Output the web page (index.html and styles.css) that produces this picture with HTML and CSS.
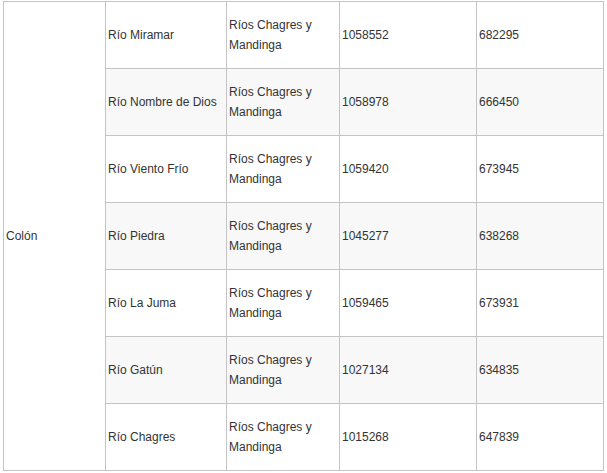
FILE: index.html
```html
<!DOCTYPE html>
<html>
<head>
<meta charset="utf-8">
<link rel="stylesheet" href="styles.css">
</head>
<body>
<table class="rivers">
  <colgroup>
    <col class="c1"><col class="c2"><col class="c3"><col class="c4"><col class="c5">
  </colgroup>
  <tbody>
    <tr>
      <td rowspan="7" class="prov">Colón</td>
      <td>Río Miramar</td>
      <td>Ríos Chagres y Mandinga</td>
      <td>1058552</td>
      <td>682295</td>
    </tr>
    <tr class="alt">
      <td>Río Nombre de Dios</td>
      <td>Ríos Chagres y Mandinga</td>
      <td>1058978</td>
      <td>666450</td>
    </tr>
    <tr>
      <td>Río Viento Frío</td>
      <td>Ríos Chagres y Mandinga</td>
      <td>1059420</td>
      <td>673945</td>
    </tr>
    <tr class="alt">
      <td>Río Piedra</td>
      <td>Ríos Chagres y Mandinga</td>
      <td>1045277</td>
      <td>638268</td>
    </tr>
    <tr>
      <td>Río La Juma</td>
      <td>Ríos Chagres y Mandinga</td>
      <td>1059465</td>
      <td>673931</td>
    </tr>
    <tr class="alt">
      <td>Río Gatún</td>
      <td>Ríos Chagres y Mandinga</td>
      <td>1027134</td>
      <td>634835</td>
    </tr>
    <tr>
      <td>Río Chagres</td>
      <td>Ríos Chagres y Mandinga</td>
      <td>1015268</td>
      <td>647839</td>
    </tr>
  </tbody>
</table>
</body>
</html>
```
FILE: styles.css
```css
html, body {
  margin: 0;
  padding: 0;
  background: #ffffff;
}
.rivers {
  margin: 1px 0 0 3px;
  border-collapse: collapse;
  table-layout: fixed;
  width: 601px;
  font-family: "Liberation Sans", Arial, sans-serif;
  font-size: 12px;
  line-height: 20px;
  color: #333333;
}
.c1 { width: 102px; }
.c2 { width: 121px; }
.c3 { width: 113px; }
.c4 { width: 137px; }
.c5 { width: 127px; }
.rivers td {
  border: 1px solid #c4c4c4;
  padding: 0 2px;
  height: 66px;
  vertical-align: middle;
  text-align: left;
}
.rivers tr.alt td {
  background: #f8f8f8;
}
.rivers td.prov {
  background: #ffffff;
}
```
